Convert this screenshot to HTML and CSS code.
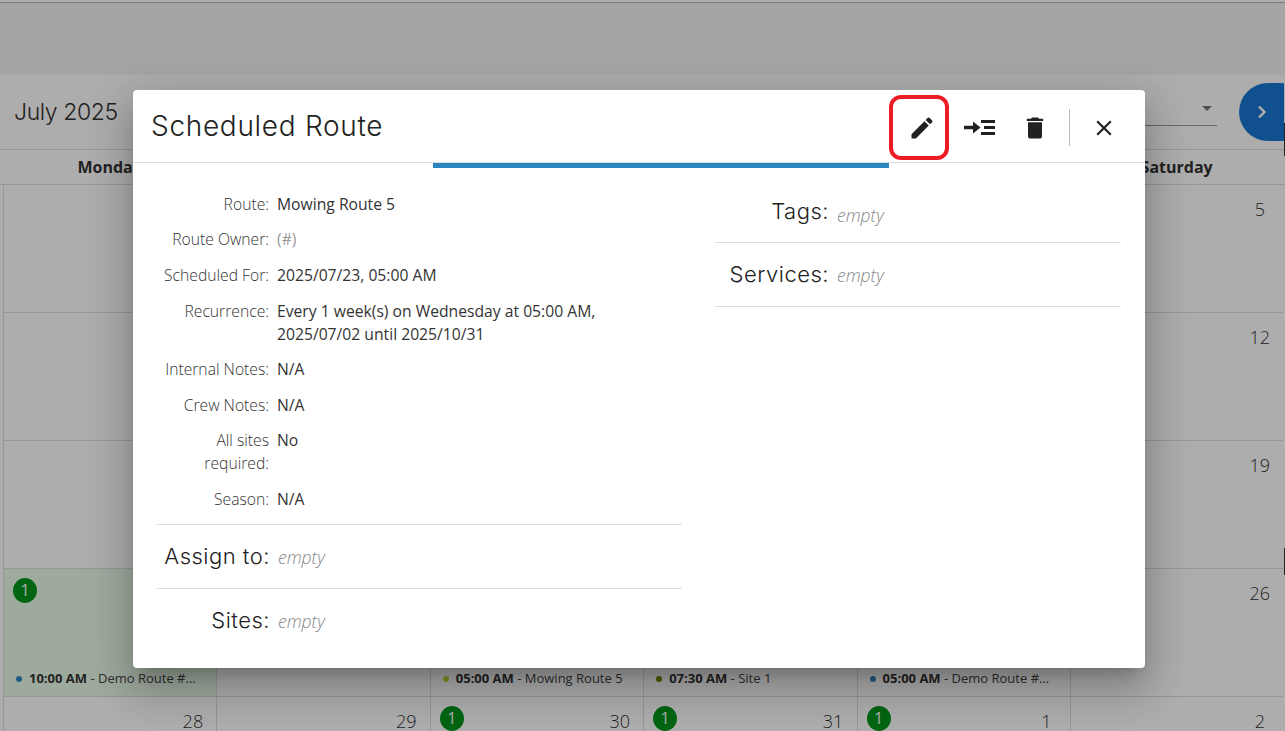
FILE: index.html
```html
<!DOCTYPE html>
<html lang="en">
<head>
<meta charset="utf-8">
<title>Scheduled Route</title>
<link rel="stylesheet" href="styles.css">
</head>
<body>
<div class="page">
  <div class="topbar"></div>
  <div class="toolbar">
    <div class="month">July 2025</div>
    <div class="select"><span class="caret"></span></div>
    <div class="next"><svg width="12" height="14" viewBox="0 0 12 14"><path d="M3 1.500 8.500 7 3 12.500" fill="none" stroke="#fff" stroke-width="2.400"/></svg></div>
  </div>
  <div class="days">
    <div>Monday</div><div>Tuesday</div><div>Wednesday</div><div>Thursday</div><div>Friday</div><div>Saturday</div>
  </div>
  <div class="grid">
    <div class="cell"></div><div class="cell"></div><div class="cell"></div><div class="cell"></div><div class="cell"></div><div class="cell"><div class="cell-top end"><span class="num">5</span></div></div>
    <div class="cell"></div><div class="cell"></div><div class="cell"></div><div class="cell"></div><div class="cell"></div><div class="cell"><div class="cell-top end"><span class="num">12</span></div></div>
    <div class="cell"></div><div class="cell"></div><div class="cell"></div><div class="cell"></div><div class="cell"></div><div class="cell"><div class="cell-top end"><span class="num">19</span></div></div>
    <div class="cell today"><div class="cell-top"><span class="badge">1</span></div><div class="event"><i class="dot blue"></i><b>10:00 AM</b> - Demo Route #...</div></div>
    <div class="cell"></div>
    <div class="cell"><div class="event"><i class="dot lime"></i><b>05:00 AM</b> - Mowing Route 5</div></div>
    <div class="cell"><div class="event"><i class="dot olive"></i><b>07:30 AM</b> - Site 1</div></div>
    <div class="cell"><div class="event"><i class="dot blue"></i><b>05:00 AM</b> - Demo Route #...</div></div>
    <div class="cell"><div class="cell-top end"><span class="num">26</span></div></div>
    <div class="cell"><div class="cell-top end"><span class="num">28</span></div></div>
    <div class="cell"><div class="cell-top end"><span class="num">29</span></div></div>
    <div class="cell"><div class="cell-top"><span class="badge">1</span><span class="num">30</span></div></div>
    <div class="cell"><div class="cell-top"><span class="badge">1</span><span class="num">31</span></div></div>
    <div class="cell"><div class="cell-top"><span class="badge">1</span><span class="num">1</span></div></div>
    <div class="cell"><div class="cell-top end"><span class="num">2</span></div></div>
  </div>
  <span class="edge edge-a"></span>
  <span class="edge edge-b"></span>
</div>
<div class="overlay">
  <div class="modal">
    <header class="modal-head">
      <h1>Scheduled Route</h1>
      <div class="actions">
        <button class="icon-btn edit"><svg width="28" height="28" viewBox="0 0 24 24"><path d="M3 17.250V21h3.750L17.810 9.940l-3.750-3.750L3 17.250zM20.710 7.040a1 1 0 0 0 0-1.410l-2.340-2.340a1 1 0 0 0-1.410 0l-1.830 1.830 3.750 3.750 1.830-1.830z"/></svg></button>
        <button class="icon-btn move"><svg width="32" height="17" viewBox="0 0 32 17"><path d="M0 6.700h9V2.500l7.500 6-7.500 6v-4.200H0zM17 1h14v3H17zM20 7h11v3H20zM17 13h14v3H17z"/></svg></button>
        <button class="icon-btn trash"><svg width="28" height="28" viewBox="0 0 24 24"><path d="M6 19c0 1.100.9 2 2 2h8c1.100 0 2-.9 2-2V7H6v12zM19 4h-3.500l-1-1h-5l-1 1H5v2h14V4z"/></svg></button>
        <span class="sep"></span>
        <button class="icon-btn close"><svg width="26" height="26" viewBox="0 0 24 24"><path d="M19 6.410 17.590 5 12 10.590 6.410 5 5 6.410 10.590 12 5 17.590 6.410 19 12 13.410 17.590 19 19 17.590 13.410 12z"/></svg></button>
      </div>
    </header>
    <div class="inkbar"></div>
    <div class="body">
      <section class="col-left">
        <dl class="facts">
          <dt>Route:</dt><dd>Mowing Route 5</dd>
          <dt>Route Owner:</dt><dd class="muted">(#)</dd>
          <dt>Scheduled For:</dt><dd>2025/07/23, 05:00 AM</dd>
          <dt>Recurrence:</dt><dd>Every 1 week(s) on Wednesday at 05:00 AM, 2025/07/02 until 2025/10/31</dd>
          <dt>Internal Notes:</dt><dd>N/A</dd>
          <dt>Crew Notes:</dt><dd>N/A</dd>
          <dt>All sites required:</dt><dd>No</dd>
          <dt>Season:</dt><dd>N/A</dd>
        </dl>
        <div class="big-row"><span class="big-label">Assign to:</span><span class="empty">empty</span></div>
        <div class="big-row"><span class="big-label">Sites:</span><span class="empty">empty</span></div>
      </section>
      <section class="col-right">
        <div class="big-row r1"><span class="big-label">Tags:</span><span class="empty">empty</span></div>
        <div class="big-row r2"><span class="big-label">Services:</span><span class="empty">empty</span></div>
      </section>
    </div>
    <div class="highlight"></div>
  </div>
</div>
</body>
</html>
```
FILE: styles.css
```css
* { box-sizing: border-box; }
html, body { margin: 0; height: 731px; overflow: hidden; }
body { font-family: "Open Sans", "Liberation Sans", sans-serif; color: #333; background: #fff; position: relative; }
.page { height: 731px; display: flex; flex-direction: column; overflow: hidden; position: relative; }
.topbar { height: 75px; background: #f4f4f4; border-top: 2px solid #fff; box-shadow: inset 0 1px 0 #b5b5b5; flex: none; }
.toolbar { height: 75px; width: 1284px; flex: none; display: flex; align-items: center; background: #fff; border-bottom: 1px solid #ddd; padding-left: 14px; position: relative; overflow: hidden; }
.month { font-family: Inter, "Open Sans", sans-serif; font-weight: 300; font-size: 23px; letter-spacing: -.4px; color: #333; }
.select { position: absolute; left: 1145px; top: 0; width: 72px; height: 51px; border-bottom: 1px solid #9a9a9a; }
.caret { position: absolute; right: 5px; top: 31px; border: 5px solid transparent; border-top-color: #777; border-bottom-width: 0; }
.next { position: absolute; left: 1239px; top: 8px; width: 70px; height: 58px; border-radius: 29px; background: #1976d2; display: flex; align-items: center; padding-left: 17px; }
.days { height: 35px; flex: none; display: grid; grid-template-columns: repeat(6, 213.4px); padding-left: 3px; border-bottom: 1px solid #ddd; background: #fff; font-weight: 700; font-size: 16px; color: #333; line-height: 34px; text-align: center; }
.grid { flex: 1; display: grid; grid-template-columns: repeat(6, 213.4px); grid-auto-rows: 128px; padding-left: 3px; background: #fff; }
.cell { border-left: 1px solid #ddd; border-bottom: 1px solid #ddd; padding: 14px 13px 0 9px; position: relative; font-size: 18px; line-height: 20px; color: #333; display: flex; flex-direction: column; justify-content: space-between; }
.cell-top { display: flex; justify-content: space-between; align-items: flex-start; }
.end { justify-content: flex-end; }
.num { min-width: 21px; text-align: center; font-weight: 300; }
.today { background: #ebfbe9; }
.badge { width: 24px; height: 25px; margin-top: -5px; border-radius: 50%; background: #00961c; color: #fff; font-size: 16px; line-height: 25px; text-align: center; }
.event { font-size: 13px; line-height: 18px; text-align: left; color: #444; white-space: nowrap; margin-bottom: 9px; margin-top: auto; padding-left: 3px; }
.event b { font-weight: 700; color: #333; }
.dot { display: inline-block; width: 6px; height: 6px; border-radius: 50%; margin-right: 7px; vertical-align: 1px; }
.blue { background: #2e86c1; }
.lime { background: #c0d83c; }
.olive { background: #7a8a00; }
.edge { position: absolute; right: 0; width: 1px; background: #333; }
.edge-a { top: 123px; height: 33px; }
.edge-b { top: 548px; height: 27px; }

.overlay { position: absolute; inset: 0; background: rgba(0,0,0,.32); padding: 90px 0 0 133px; }
.modal { width: 1012px; height: 578px; background: #fff; border-radius: 4px; position: relative; box-shadow: 0 11px 15px -7px rgba(0,0,0,.2), 0 24px 38px 3px rgba(0,0,0,.14), 0 9px 46px 8px rgba(0,0,0,.12); display: flex; flex-direction: column; }
.modal-head { height: 73px; flex: none; display: flex; align-items: center; justify-content: space-between; padding: 0 28px 0 18px; border-bottom: 1px solid #ddd; }
h1 { margin: 0; font-family: Inter, "Open Sans", sans-serif; font-weight: 300; font-size: 28px; letter-spacing: .7px; color: #222; }
.actions { display: flex; align-items: center; height: 37px; margin-top: 3px; }
.icon-btn { background: none; border: 0; padding: 0; display: flex; align-items: center; justify-content: center; fill: #212121; }
.edit { width: 28px; margin-right: 28px; }
.move { width: 32px; margin-right: 25px; }
.trash { width: 28px; margin-right: 20px; }
.sep { width: 1px; height: 37px; background: #bbb; margin-right: 21px; }
.close { width: 26px; }
.inkbar { position: absolute; left: 300px; top: 73px; width: 456px; height: 5px; background: #2e86c1; }
.highlight { position: absolute; left: 756px; top: 5px; width: 60px; height: 65px; border: 4px solid #ed1c24; border-radius: 12px; }
.body { display: flex; padding: 29.85px 24px 0 23px; gap: 33px; flex: 1; }
.col-left { width: 526px; flex: none; }
.col-right { flex: 1; margin-top: -13.85px; }
.facts { margin: 0; display: grid; grid-template-columns: 113px 1fr; column-gap: 8px; row-gap: 12.6px; font-size: 15.7px; line-height: 23px; padding-bottom: 12.65px; }
dt { text-align: right; font-weight: 300; color: #333; }
dd { margin: 0; color: #333; }
.muted { color: #999; }
.big-row { display: flex; align-items: baseline; border-top: 1px solid #ddd; height: 64px; padding-top: 18px; }
.col-left .big-label { width: 114px; }
.big-label { font-family: Inter, "Open Sans", sans-serif; font-weight: 300; font-size: 22px; letter-spacing: .5px; text-align: right; color: #222; flex: none; margin-right: 8px; white-space: nowrap; }
.empty { font-style: italic; font-weight: 300; font-size: 17.5px; color: #888; }
.col-right .big-label { width: 114px; }
.r1 { align-items: flex-start; border-top: 0; border-bottom: 1px solid #ddd; height: 64px; padding-top: 19px; }
.r1 .empty { margin-top: 5px; }
.r2 { border-top: 0; border-bottom: 1px solid #ddd; height: 64px; padding-top: 18px; }
```
